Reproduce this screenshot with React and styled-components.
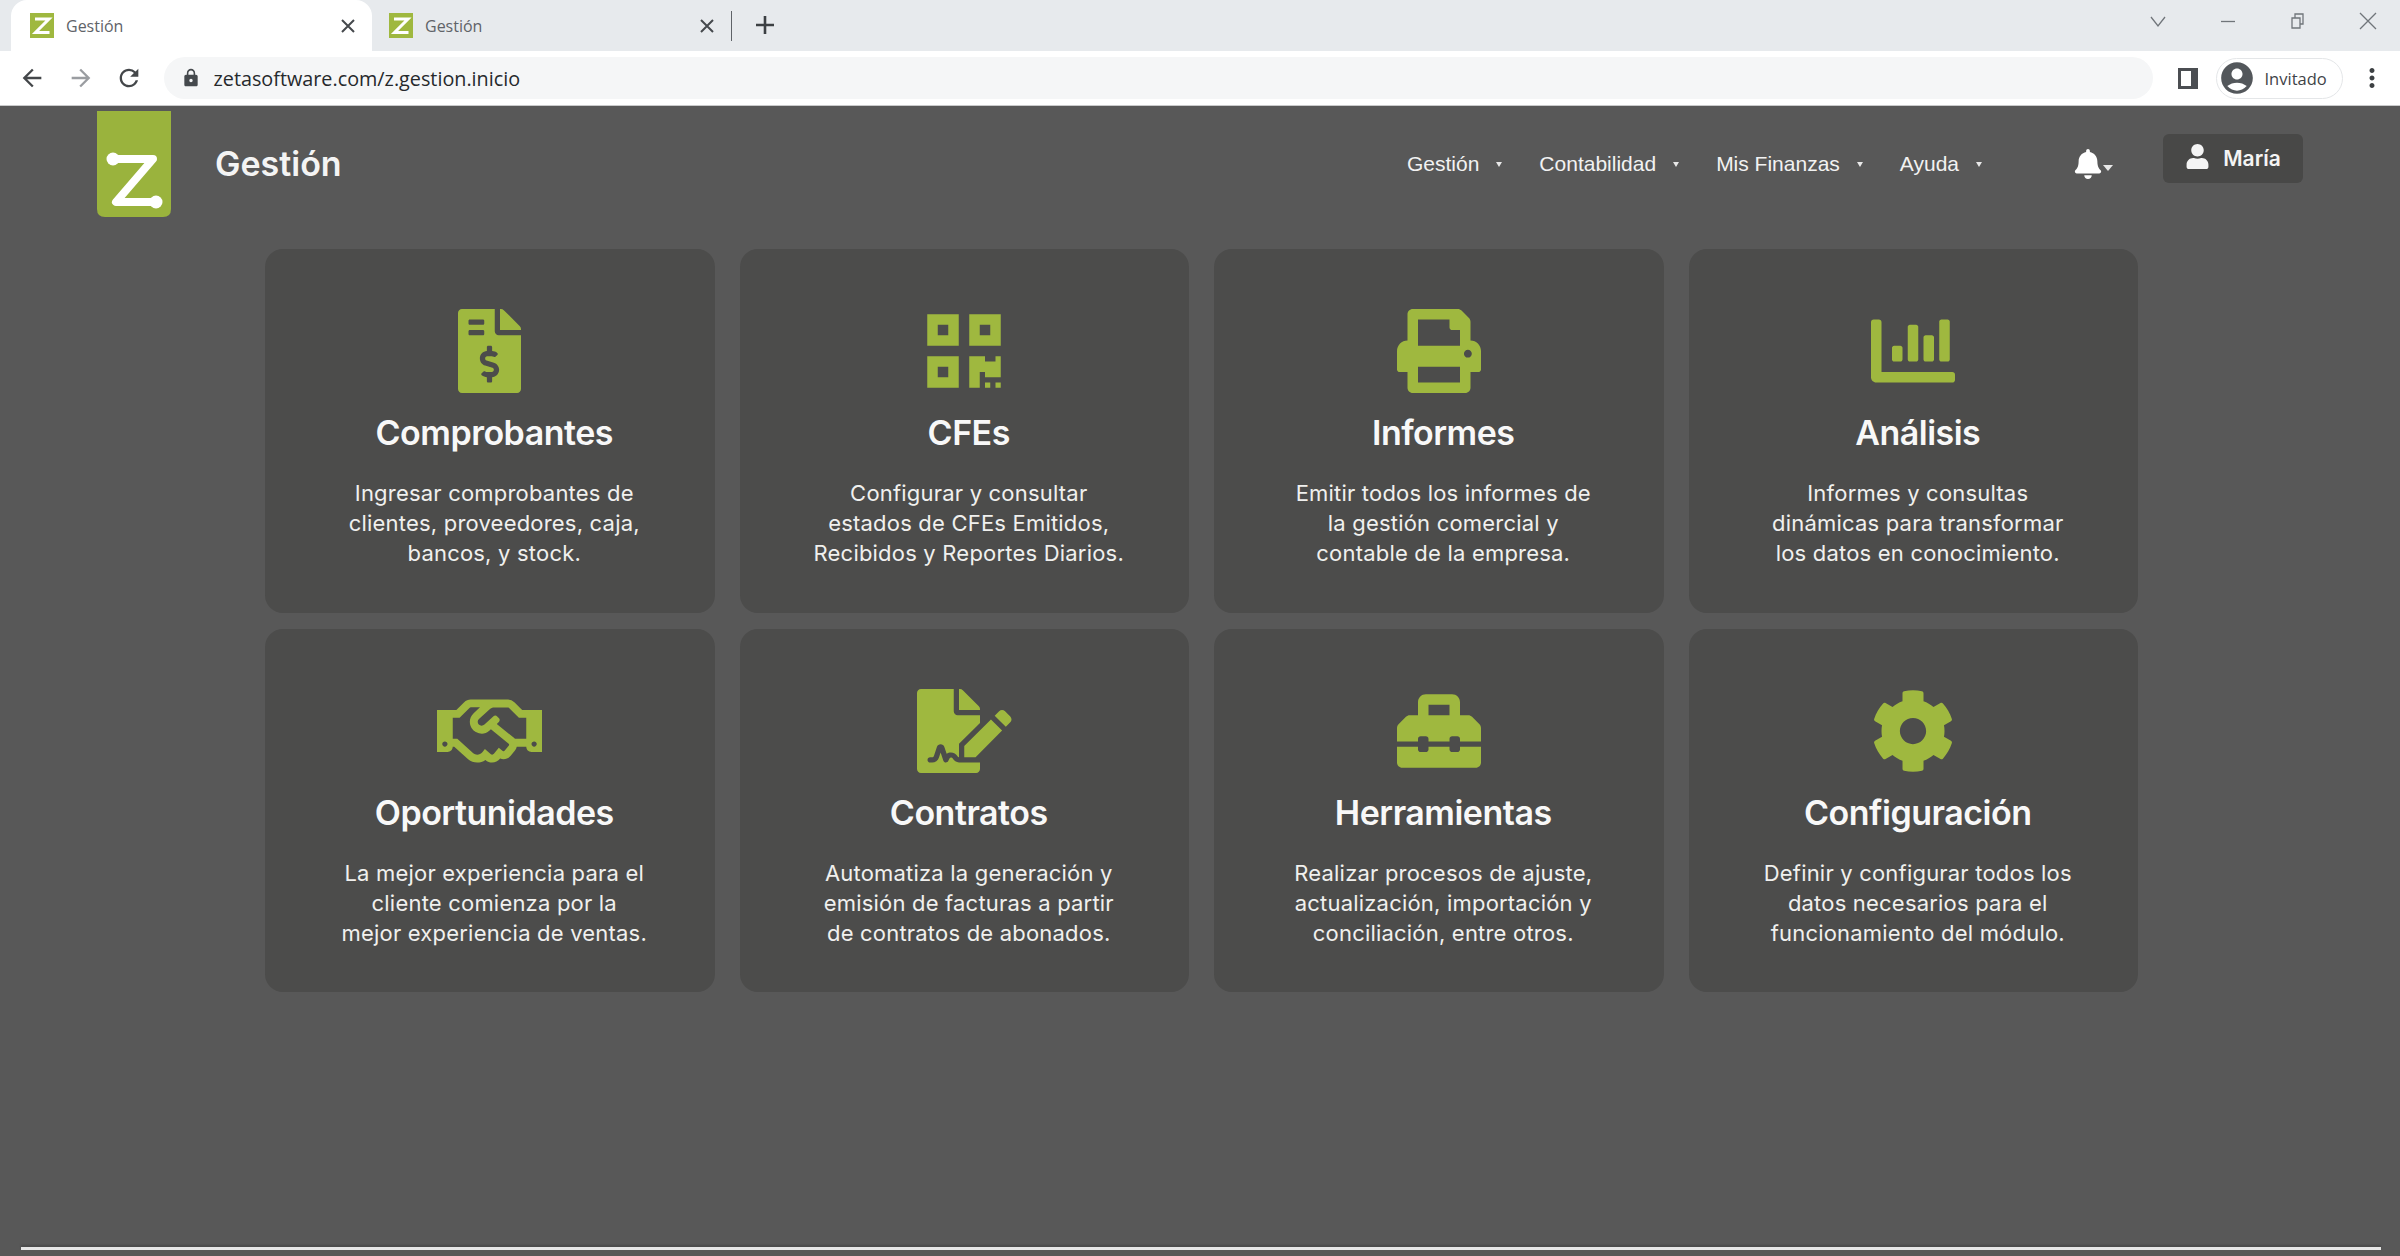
import React from "react";
import styled, { createGlobalStyle } from "styled-components";
import {
  FaFileInvoiceDollar,
  FaQrcode,
  FaPrint,
  FaChartBar,
  FaRegHandshake,
  FaFileSignature,
  FaToolbox,
  FaCog,
  FaBell,
  FaUser,
} from "react-icons/fa";
import { MdLock, MdAccountCircle, MdMoreVert, MdArrowBack, MdArrowForward, MdRefresh } from "react-icons/md";

const GlobalStyle = createGlobalStyle`
  html, body {
    margin: 0;
    padding: 0;
    background: #585858;
  }
  * { box-sizing: border-box; }
`;

const Screen = styled.div`
  width: 2400px;
  height: 1256px;
  display: flex;
  flex-direction: column;
  overflow: hidden;
  font-family: Inter, "Liberation Sans", sans-serif;
`;

/* browser chrome */
const TabStrip = styled.div`
  height: 51px;
  flex: none;
  display: flex;
  align-items: stretch;
  padding-left: 11px;
  background: #e7eaed;
`;

const Tab = styled.div`
  width: ${(p) => (p.$active ? "361px" : "359px")};
  display: flex;
  align-items: center;
  padding-left: ${(p) => (p.$active ? "19px" : "17px")};
  padding-right: 17px;
  background: ${(p) => (p.$active ? "#ffffff" : "transparent")};
  border-radius: 16px 16px 0 0;
`;

const TabTitle = styled.span`
  margin-left: 12px;
  flex: 1;
  font-family: "Open Sans", sans-serif;
  font-size: 16px;
  color: #5f6368;
`;

const TabClose = styled.svg`
  width: 14px;
  height: 14px;
  stroke: #45494d;
  stroke-width: 2;
  fill: none;
`;

const TabDivider = styled.div`
  width: 1px;
  height: 30px;
  margin: 11px 0 0 0;
  background: #5f6368;
`;

const NewTab = styled.svg`
  width: 20px;
  height: 20px;
  margin: 15px 0 0 23px;
  stroke: #3c4043;
  stroke-width: 2.6;
`;

const WindowButtons = styled.div`
  margin-left: auto;
  display: flex;
  align-items: flex-start;
  padding: 12px 23px 0 0;
  gap: 52px;
`;

const WindowIcon = styled.svg`
  width: 18px;
  height: 18px;
  fill: none;
  stroke: #70757a;
  stroke-width: 1.3;
`;

const Toolbar = styled.div`
  height: 55px;
  flex: none;
  display: flex;
  align-items: center;
  padding-left: 18px;
  background: #ffffff;
  border-bottom: 1px solid #c9cacb;
  color: #3c4043;
`;

const NavButton = styled.div`
  width: 48.5px;
  flex: none;
  display: flex;
  color: ${(p) => (p.$muted ? "#9a9da1" : "#44474a")};
  font-size: 28px;
`;

const Omnibox = styled.div`
  width: 1989px;
  height: 42px;
  flex: none;
  display: flex;
  align-items: center;
  padding-left: 17px;
  border-radius: 21px;
  background: #f5f6f7;
  font-size: 20px;
  color: #45494d;
`;

const Url = styled.span`
  margin-left: 13px;
  font-family: "Open Sans", sans-serif;
  font-size: 19.8px;
  color: #26292c;
`;

const SidePanel = styled.div`
  width: 20px;
  height: 21px;
  flex: none;
  margin-left: 25px;
  border: 3px solid #4b4e52;
  border-right-width: 7px;
`;

const ProfilePill = styled.div`
  width: 127px;
  height: 41px;
  flex: none;
  margin-left: 18px;
  display: flex;
  align-items: center;
  padding-left: 1px;
  gap: 9px;
  border: 1px solid #e4e6e8;
  border-radius: 21px;
  font-family: "Open Sans", sans-serif;
  font-size: 16.5px;
  color: #3f4347;
  svg { font-size: 38px; color: #53575b; flex: none; }
`;

const Kebab = styled.div`
  display: flex;
  flex: none;
  margin-left: 14px;
  font-size: 30px;
  color: #3c4043;
`;

/* page */
const Page = styled.div`
  flex: 1;
  display: flex;
  flex-direction: column;
  background: #585858;
`;

const Header = styled.header`
  height: 114px;
  flex: none;
  display: flex;
  align-items: center;
  padding: 0 97px;
`;

const Logo = styled.svg`
  width: 74px;
  height: 106px;
  flex: none;
  margin-top: 2px;
`;

const Brand = styled.div`
  margin-left: 44px;
  font-size: 34px;
  font-weight: 600;
  color: #f4f4f4;
`;

const Menu = styled.nav`
  margin-left: auto;
  margin-top: 2px;
  display: flex;
  align-items: center;
  gap: 37px;
  font-family: "Liberation Sans", sans-serif;
  font-size: 21px;
  color: #f2f2f2;
`;

const MenuItem = styled.div`
  display: flex;
  align-items: center;
  gap: 17px;
`;

const Caret = styled.span`
  width: 0;
  height: 0;
  border-left: 3px solid transparent;
  border-right: 3px solid transparent;
  border-top: 5px solid #e8e8e8;
`;

const BellCaret = styled(Caret)`
  border-left-width: 5px;
  border-right-width: 5px;
  border-top-width: 6px;
  margin-top: 8px;
`;

const BellWrap = styled.div`
  margin-left: 91px;
  margin-top: 2px;
  display: flex;
  align-items: center;
  color: #ffffff;
  font-size: 30px;
`;

const UserButton = styled.button`
  width: 140px;
  height: 49px;
  margin: 0 0 9px 50px;
  display: flex;
  align-items: center;
  justify-content: center;
  gap: 13px;
  border: none;
  border-radius: 6px;
  background: #484847;
  color: #f4f4f4;
  font-family: Inter, sans-serif;
  font-size: 21px;
  font-weight: 600;
  svg { font-size: 25px; margin-top: -4px; }
`;

const CardGrid = styled.main`
  display: grid;
  grid-template-columns: repeat(4, 449.5px);
  grid-auto-rows: 363.5px;
  column-gap: 25px;
  row-gap: 16px;
  margin: 29px 0 0 265px;
`;

const Card = styled.article`
  display: flex;
  flex-direction: column;
  align-items: center;
  padding-top: 60px;
  border-radius: 18px;
  background: #4c4c4b;
`;

const IconBox = styled.div`
  height: 84px;
  display: flex;
  justify-content: center;
  color: #9fb83f;
  svg {
    height: 84px;
    width: ${(p) => p.$width}px;
  }
`;

const CardText = styled.div`
  padding-left: 9px;
  text-align: center;
  white-space: nowrap;
`;

const CardTitle = styled.h2`
  margin: 20px 0 0;
  font-size: 34px;
  line-height: 40px;
  font-weight: 600;
  letter-spacing: -0.5px;
  color: #f8f8f8;
`;

const CardDesc = styled.p`
  margin: 25px 0 0;
  font-size: 22px;
  line-height: 30px;
  font-weight: 400;
  letter-spacing: 0.2px;
  color: #f0f0ee;
`;

const BottomBar = styled.div`
  height: 3px;
  margin: auto 19px 6px 21px;
  background: #e6e6e6;
  box-shadow: 0 -2px 2px #4a4a4a;
`;

const ZMark = () => (
  <>
    <path d="M16 48 H56 L19 91 H59" fill="none" stroke="#ffffff" strokeWidth="8" strokeLinejoin="round" />
    <circle cx="16" cy="48" r="6.5" fill="#ffffff" />
    <circle cx="59" cy="91" r="6.5" fill="#ffffff" />
  </>
);

const Favicon = () => (
  <svg width="24" height="25" viewBox="0 0 24 25">
    <rect width="24" height="25" fill="#9fb83f" />
    <path d="M5 6 H19 L5.5 19.5 H19.5" fill="none" stroke="#ffffff" strokeWidth="3" />
  </svg>
);

const cards = [
  { title: "Comprobantes", Icon: FaFileInvoiceDollar, width: 63, lines: ["Ingresar comprobantes de", "clientes, proveedores, caja,", "bancos, y stock."] },
  { title: "CFEs", Icon: FaQrcode, width: 74, lines: ["Configurar y consultar", "estados de CFEs Emitidos,", "Recibidos y Reportes Diarios."] },
  { title: "Informes", Icon: FaPrint, width: 84, lines: ["Emitir todos los informes de", "la gestión comercial y", "contable de la empresa."] },
  { title: "Análisis", Icon: FaChartBar, width: 84, lines: ["Informes y consultas", "dinámicas para transformar", "los datos en conocimiento."] },
  { title: "Oportunidades", Icon: FaRegHandshake, width: 105, lines: ["La mejor experiencia para el", "cliente comienza por la", "mejor experiencia de ventas."] },
  { title: "Contratos", Icon: FaFileSignature, width: 94.5, lines: ["Automatiza la generación y", "emisión de facturas a partir", "de contratos de abonados."] },
  { title: "Herramientas", Icon: FaToolbox, width: 84, lines: ["Realizar procesos de ajuste,", "actualización, importación y", "conciliación, entre otros."] },
  { title: "Configuración", Icon: FaCog, width: 84, lines: ["Definir y configurar todos los", "datos necesarios para el", "funcionamiento del módulo."] },
];

const menu = ["Gestión", "Contabilidad", "Mis Finanzas", "Ayuda"];

const CloseGlyph = () => (
  <TabClose viewBox="0 0 14 14">
    <path d="M1 1 L13 13 M13 1 L1 13" />
  </TabClose>
);

export default function App() {
  return (
    <Screen>
      <GlobalStyle />
      <TabStrip>
        <Tab $active>
          <Favicon />
          <TabTitle>Gestión</TabTitle>
          <CloseGlyph />
        </Tab>
        <Tab>
          <Favicon />
          <TabTitle>Gestión</TabTitle>
          <CloseGlyph />
        </Tab>
        <TabDivider />
        <NewTab viewBox="0 0 20 20">
          <path d="M10 1 V19 M1 10 H19" />
        </NewTab>
        <WindowButtons>
          <WindowIcon viewBox="0 0 18 18">
            <path d="M2 5 L9 14 L16 5" />
          </WindowIcon>
          <WindowIcon viewBox="0 0 18 18">
            <path d="M2 9.5 H16" />
          </WindowIcon>
          <WindowIcon viewBox="0 0 18 18">
            <path d="M3 6 H11 V16 H3 Z M6 6 V2 H14 V12 H11" />
          </WindowIcon>
          <WindowIcon viewBox="0 0 18 18">
            <path d="M1 1 L17 17 M17 1 L1 17" />
          </WindowIcon>
        </WindowButtons>
      </TabStrip>
      <Toolbar>
        <NavButton><MdArrowBack /></NavButton>
        <NavButton $muted><MdArrowForward /></NavButton>
        <NavButton><MdRefresh /></NavButton>
        <Omnibox>
          <MdLock />
          <Url>zetasoftware.com/z.gestion.inicio</Url>
        </Omnibox>
        <SidePanel />
        <ProfilePill>
          <MdAccountCircle />
          <span>Invitado</span>
        </ProfilePill>
        <Kebab><MdMoreVert /></Kebab>
      </Toolbar>
      <Page>
        <Header>
          <Logo viewBox="0 0 74 106">
            <path d="M0 0 H74 V98 Q74 106 66 106 H8 Q0 106 0 98 Z" fill="#9ab33d" />
            <ZMark />
          </Logo>
          <Brand>Gestión</Brand>
          <Menu>
            {menu.map((item) => (
              <MenuItem key={item}>
                {item}
                <Caret />
              </MenuItem>
            ))}
          </Menu>
          <BellWrap>
            <FaBell />
            <BellCaret />
          </BellWrap>
          <UserButton>
            <FaUser />
            María
          </UserButton>
        </Header>
        <CardGrid>
          {cards.map(({ title, Icon, width, lines }) => (
            <Card key={title}>
              <IconBox $width={width}><Icon /></IconBox>
              <CardText>
                <CardTitle>{title}</CardTitle>
                <CardDesc>
                  {lines.map((line) => (
                    <React.Fragment key={line}>
                      {line}
                      <br />
                    </React.Fragment>
                  ))}
                </CardDesc>
              </CardText>
            </Card>
          ))}
        </CardGrid>
        <BottomBar />
      </Page>
    </Screen>
  );
}
